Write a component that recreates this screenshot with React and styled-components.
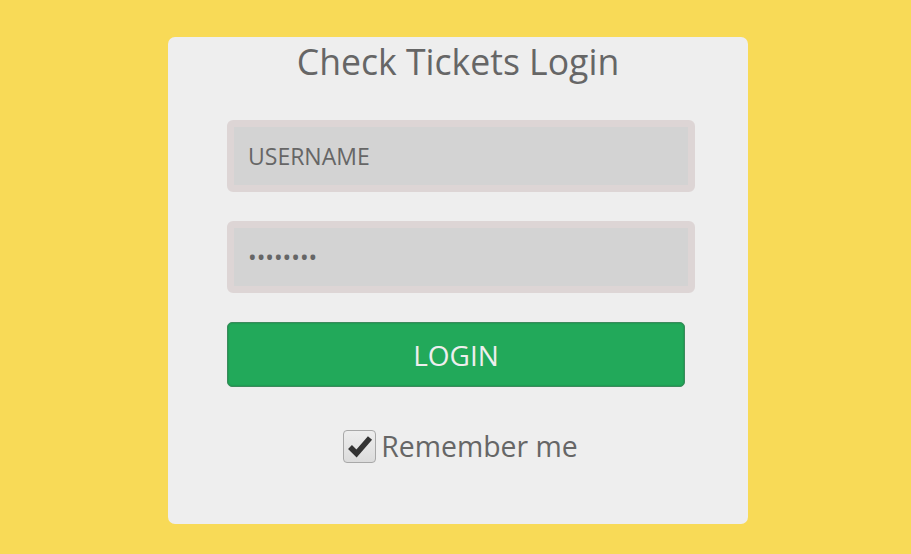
import React from "react";
import styled, { createGlobalStyle } from "styled-components";

const Global = createGlobalStyle`
  html, body { margin: 0; padding: 0; background: #f8da57; }
  body { font-family: "Open Sans", "Liberation Sans", sans-serif; }
  * { box-sizing: border-box; }
`;

const Page = styled.div`
  width: 911px;
  height: 554px;
  padding: 37px 0 0 168px;
`;

const Card = styled.form`
  width: 580px;
  height: 487px;
  background: #eeeeee;
  border-radius: 7px;
  padding: 6px 53px 0 59px;
  display: flex;
  flex-direction: column;
  align-items: flex-start;
`;

const Title = styled.h1`
  align-self: stretch;
  margin: 0 -53px 0 -59px;
  font-size: 35.6px;
  line-height: 36px;
  font-weight: 400;
  color: #666666;
  text-align: center;
`;

const Field = styled.input`
  width: 468px;
  height: 72px;
  margin-top: ${(p) => p.$top}px;
  border: 7px solid #ddd5d5;
  border-radius: 6px;
  background: #d3d3d3;
  padding: 0 0 0 14px;
  font-family: "Open Sans", "Liberation Sans", sans-serif;
  font-size: 23px;
  color: #666666;
  outline: none;
  &::placeholder { color: #666666; opacity: 1; }
`;

const Button = styled.button`
  width: 458px;
  height: 65px;
  margin-top: 29px;
  border: 1px solid #3c8a5c;
  border-radius: 5px;
  background: #22a95a;
  color: #eeeeee;
  font-family: "Open Sans", "Liberation Sans", sans-serif;
  font-size: 28px;
  padding: 0;
  box-shadow: inset 0 0 2px rgba(0,0,0,0.25);
`;

const Remember = styled.label`
  align-self: stretch;
  margin: 42px -53px 0 -59px;
  display: flex;
  justify-content: center;
  align-items: center;
  gap: 5px;
  padding-left: 5px;
  font-size: 28.4px;
  line-height: 34px;
  color: #666666;
`;

const Box = styled.span`
  width: 33px;
  height: 33px;
  border: 1px solid #a8a8a8;
  border-radius: 4px;
  background: linear-gradient(#ededed, #dcdcdc);
  display: flex;
  align-items: center;
  justify-content: center;
`;

export default function App() {
  return (
    <>
      <Global />
      <Page>
        <Card onSubmit={(e) => e.preventDefault()}>
          <Title>Check Tickets Login</Title>
          <Field $top={41} type="text" placeholder="USERNAME" />
          <Field $top={29} type="password" defaultValue="12345678" />
          <Button type="submit">LOGIN</Button>
          <Remember>
            <Box>
              <svg width="26" height="24" viewBox="0 0 26 24">
                <path d="M3 13 L9.5 19.5 L23 4" fill="none" stroke="#333" strokeWidth="5.5" strokeLinejoin="miter" />
              </svg>
            </Box>
            Remember me
          </Remember>
        </Card>
      </Page>
    </>
  );
}
